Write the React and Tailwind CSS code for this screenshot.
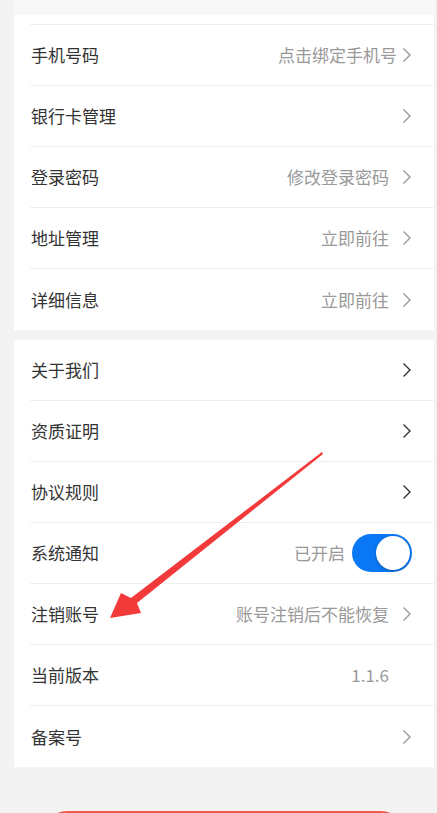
import React from "react";

const Chevron = ({ dark }) => (
  <svg width="10" height="16" viewBox="0 0 10 16" className="shrink-0 ml-[13px]">
    <path d="M1.5 1.5 L8 8 L1.5 14.5" fill="none" stroke={dark ? "#333" : "#999"} strokeWidth="1.4" />
  </svg>
);

function Row({ label, value, arrow = true, dark, last, gap }) {
  return (
    <div className={`h-[61px] ml-[16px] flex items-center pr-[22px] ${last ? "" : "border-b border-[#eeeeee]"}`}>
      <span className="text-[17px] text-[#333] flex-1 pl-px">{label}</span>
      {value && <span className={`text-[17px] text-[#999] ${gap ? "-mr-[8px]" : ""}`}>{value}</span>}
      {arrow ? <Chevron dark={dark} /> : <span className="w-[23px]" />}
    </div>
  );
}

export default function App() {
  return (
    <div className="relative min-h-screen bg-[#f3f3f3] pl-[14px] pr-[3px] overflow-hidden" style={{ fontFamily: '"Noto Sans CJK SC", "Noto Sans", sans-serif' }}>
      <div className="bg-white">
        <div className="h-[15px] bg-[#f8f8f8]" />
        <div className="h-[10px] ml-[16px] border-b border-[#eeeeee]" />
        <Row label="手机号码" value="点击绑定手机号" gap />
        <Row label="银行卡管理" />
        <Row label="登录密码" value="修改登录密码" />
        <Row label="地址管理" value="立即前往" />
        <Row label="详细信息" value="立即前往" last />
      </div>

      <div className="bg-white mt-[10px]">
        <Row label="关于我们" dark />
        <Row label="资质证明" dark />
        <Row label="协议规则" dark />
        <div className="h-[61px] ml-[16px] flex items-center pr-[22px] border-b border-[#eeeeee]">
          <span className="text-[17px] text-[#333] flex-1 pl-px">系统通知</span>
          <span className="text-[17px] text-[#999] mr-[7px]">已开启</span>
          <div className="w-[60px] h-[38px] rounded-full bg-[#0a78f5] flex items-center justify-end p-[2px]">
            <div className="w-[34px] h-[34px] rounded-full bg-white shadow-[0_1px_3px_rgba(0,0,0,0.3)]" />
          </div>
        </div>
        <Row label="注销账号" value="账号注销后不能恢复" />
        <Row label="当前版本" value="1.1.6" arrow={false} />
        <Row label="备案号" last />
      </div>

      <div className="mt-[44px] mx-[29px] h-[48px] rounded-full border-2 border-[#f05a4a]" />

      <svg className="absolute left-0 top-0 pointer-events-none" width="437" height="813">
        <polygon points="322,452 323,454 137,603 141,613 110,618 121,593 131,598" fill="#f23a3a" />
      </svg>
    </div>
  );
}
